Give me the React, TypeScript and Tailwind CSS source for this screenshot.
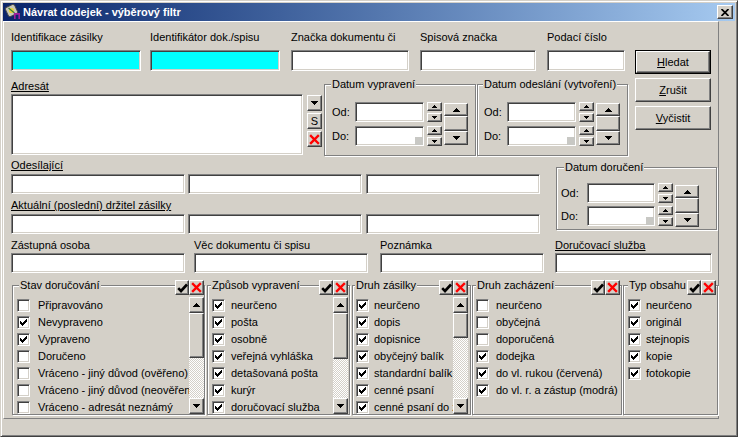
import React from "react";

const sunken =
  "border border-t-[#808080] border-l-[#808080] border-b-white border-r-white shadow-[inset_1px_1px_0_#404040,inset_-1px_-1px_0_#d4d0c8]";
const raised =
  "border border-t-white border-l-white border-b-[#404040] border-r-[#404040] shadow-[inset_-1px_-1px_0_#808080] bg-[#d4d0c8]";
const etched = "border border-[#808080] shadow-[inset_1px_1px_0_#fff,1px_1px_0_#fff]";

function TriSmall({ up }: { up?: boolean }) {
  return (
    <svg width="5" height="3" viewBox="0 0 5 3" shapeRendering="crispEdges">
      {up ? (
        <path d="M2 0h1v1h-1z M1 1h3v1h-3z M0 2h5v1h-5z" fill="#000" />
      ) : (
        <path d="M0 0h5v1h-5z M1 1h3v1h-3z M2 2h1v1h-1z" fill="#000" />
      )}
    </svg>
  );
}

function TriBig({ up }: { up?: boolean }) {
  return (
    <svg width="7" height="4" viewBox="0 0 7 4" shapeRendering="crispEdges">
      {up ? (
        <path d="M3 0h1v1h-1z M2 1h3v1h-3z M1 2h5v1h-5z M0 3h7v1h-7z" fill="#000" />
      ) : (
        <path d="M0 0h7v1h-7z M1 1h5v1h-5z M2 2h3v1h-3z M3 3h1v1h-1z" fill="#000" />
      )}
    </svg>
  );
}

function RedX({ s = 11 }: { s?: number }) {
  return (
    <svg width={s} height={s} viewBox="0 0 11 11">
      <path d="M2 2 L9 9 M9 2 L2 9" stroke="#ff0000" strokeWidth="2.4" strokeLinecap="square" />
    </svg>
  );
}

function BlackCheck() {
  return (
    <svg width="11" height="10" viewBox="0 0 11 10">
      <path d="M1.2 5.2 L4 8 L10 1.5" stroke="#000" strokeWidth="2.6" fill="none" />
    </svg>
  );
}

function Checkbox({ on }: { on: boolean }) {
  return (
    <div className={"w-[13px] h-[13px] shrink-0 bg-white flex items-center justify-center " + sunken}>
      {on && (
        <svg width="7" height="7" viewBox="0 0 7 7" shapeRendering="crispEdges">
          <path
            d="M6 0h1v1h-1z M5 1h2v1h-2z M0 2h1v1h-1z M4 2h3v1h-3z M0 3h2v1h-2z M3 3h3v1h-3z M0 4h5v1h-5z M1 5h3v1h-3z M2 6h1v1h-1z"
            fill="#000"
          />
        </svg>
      )}
    </div>
  );
}

function AppIcon() {
  return (
    <svg width="16" height="16" viewBox="0 0 16 16">
      <rect x="1.5" y="1.5" width="10" height="10" rx="2" fill="#c8c8b8" stroke="#4a4a4a" strokeWidth="0.9" transform="rotate(-25 6.5 6.5)" />
      <circle cx="6.5" cy="6.5" r="2.6" fill="#e6d23a" />
      <path d="M3.5 4 L9.5 9" stroke="#3c7a3c" strokeWidth="1.2" />
      <path d="M9 9h6v6h-1.6v-4.2h-2.8v4.2h-1.6z" fill="#a01ea0" />
    </svg>
  );
}

function SmallSpin({ className }: { className: string }) {
  return (
    <div className={"flex flex-col justify-between w-[15px] h-[20px] shrink-0 " + className}>
      <div className={"h-[9px] flex items-center justify-center " + raised}>
        <TriSmall up />
      </div>
      <div className={"h-[9px] flex items-center justify-center " + raised}>
        <TriSmall />
      </div>
    </div>
  );
}

function BigSpin({ className }: { className: string }) {
  return (
    <div className={"flex flex-col w-[24px] shrink-0 " + className}>
      <div className={"h-[13px] flex items-center justify-center " + raised}>
        <TriBig up />
      </div>
      <div className={"h-[15px] " + raised} />
      <div className={"h-[14px] flex items-center justify-center " + raised}>
        <TriBig />
      </div>
    </div>
  );
}

function DateRow({ label, labelW, inputW, grip }: { label: string; labelW: string; inputW: string; grip?: boolean }) {
  return (
    <div className="flex items-center h-[20px]">
      <span className={"shrink-0 leading-[13px] " + labelW}>{label}</span>
      <div className={"relative h-[20px] bg-white shrink-0 " + sunken + " " + inputW}>
        {grip && <div className="absolute right-0 bottom-0 w-[8px] h-[8px] bg-[#c8c8c4]" />}
      </div>
      <SmallSpin className="ml-[3px]" />
    </div>
  );
}

function DateGroup({
  className,
  label,
  labelPos,
  labelW,
  inputW,
  rowGap,
  bigCls,
}: {
  className: string;
  label: string;
  labelPos: string;
  labelW: string;
  inputW: string;
  rowGap: string;
  bigCls: string;
}) {
  return (
    <div className={"relative shrink-0 " + etched + " " + className}>
      <span className={"absolute -top-[7px] bg-[#d4d0c8] px-[1px] leading-[13px] whitespace-nowrap " + labelPos}>{label}</span>
      <div className="flex items-start">
        <div className={"flex flex-col " + rowGap}>
          <DateRow label="Od:" labelW={labelW} inputW={inputW} />
          <DateRow label="Do:" labelW={labelW} inputW={inputW} grip />
        </div>
        <BigSpin className={bigCls} />
      </div>
    </div>
  );
}

function Input({ className }: { className: string }) {
  return <div className={"bg-white shrink-0 " + sunken + " " + className} />;
}

function WinButton({ children }: { children: React.ReactNode }) {
  return <div className={"h-[24px] flex items-center justify-center " + raised}>{children}</div>;
}

type Item = [string, boolean];

function ListGroup({
  className,
  label,
  labelPos,
  btnPos,
  items,
  listCls,
  textCls,
  scroll,
  thumbH,
}: {
  className: string;
  label: string;
  labelPos: string;
  btnPos: string;
  items: Item[];
  listCls: string;
  textCls: string;
  scroll?: boolean;
  thumbH?: string;
}) {
  return (
    <div className={"relative shrink-0 h-[130px] " + etched + " " + className}>
      <span className={"absolute -top-[7px] bg-[#d4d0c8] px-[1px] leading-[13px] whitespace-nowrap " + labelPos}>{label}</span>
      <div className={"absolute -top-[6px] flex " + btnPos}>
        <div className={"w-[14px] h-[15px] flex items-center justify-center " + raised}>
          <BlackCheck />
        </div>
        <div className={"w-[15px] h-[15px] flex items-center justify-center " + raised}>
          <RedX s={11} />
        </div>
      </div>
      <div className="flex h-full pt-[11px]">
        <div className={"flex-1 overflow-hidden " + listCls}>
          {items.map(([t, on]) => (
            <div key={t} className="h-[17px] flex items-center whitespace-nowrap">
              <Checkbox on={on} />
              <span className={"leading-[13px] " + textCls}>{t}</span>
            </div>
          ))}
        </div>
        {scroll && (
          <div className="w-[15px] shrink-0 flex flex-col h-full">
            <div className={"h-[16px] flex items-center justify-center " + raised}>
              <TriBig up />
            </div>
            <div className={thumbH + " " + raised} />
            <div className="flex-1 bg-[repeating-conic-gradient(#d4d0c8_0_25%,#ffffff_0_50%)] bg-[length:2px_2px]" />
            <div className={"h-[16px] flex items-center justify-center " + raised}>
              <TriBig />
            </div>
          </div>
        )}
      </div>
    </div>
  );
}

function Label({ children, cls = "" }: { children: React.ReactNode; cls?: string }) {
  return <div className={"h-[14px] leading-[14px] whitespace-nowrap " + cls}>{children}</div>;
}

export default function App() {
  return (
    <div className="w-[738px] h-[437px] overflow-hidden bg-[#d4d0c8] font-['Liberation_Sans',Arial,sans-serif] text-[11px] leading-[13px] text-black border border-t-[#d4d0c8] border-l-[#d4d0c8] border-r-[#404040] border-b-[#404040] shadow-[inset_1px_1px_0_#fff,inset_-1px_-1px_0_#808080] p-[2px]">
      {/* title bar */}
      <div className="h-[18px] flex items-center bg-linear-to-r from-[#0a246a] to-[#a6caf0]">
        <div className="ml-[2px] w-[16px] h-[16px]">
          <AppIcon />
        </div>
        <div className="ml-[2px] text-white font-bold leading-[13px] whitespace-nowrap">Návrat dodejek - výběrový filtr</div>
        <div className={"ml-auto mr-[2px] w-[16px] h-[14px] flex items-center justify-center " + raised}>
          <svg width="8" height="7" viewBox="0 0 8 7">
            <path d="M0.5 0 L7.5 7 M7.5 0 L0.5 7" stroke="#000" strokeWidth="1.7" />
          </svg>
        </div>
      </div>

      {/* client panel */}
      <div className="w-[716px] h-[398px] border border-t-white border-l-white border-r-[#808080] border-b-[#808080] pl-[7px] pt-[8px]">
        {/* top section */}
        <div className="flex items-start">
          <div className="w-[617px] shrink-0">
            {/* row 1 */}
            <div className="flex items-start">
              <div className="w-[130px] shrink-0">
                <Label>Identifikace zásilky</Label>
                <div className={"mt-[6px] h-[21px] bg-[#00ffff] " + sunken} />
              </div>
              <div className="ml-[9px] w-[130px] shrink-0">
                <Label>Identifikátor dok./spisu</Label>
                <div className={"mt-[6px] h-[21px] bg-[#00ffff] " + sunken} />
              </div>
              <div className="ml-[11px] w-[118px] shrink-0">
                <Label>Značka dokumentu či</Label>
                <div className={"mt-[6px] h-[21px] bg-white " + sunken} />
              </div>
              <div className="ml-[11px] w-[116px] shrink-0">
                <Label>Spisová značka</Label>
                <div className={"mt-[6px] h-[21px] bg-white " + sunken} />
              </div>
              <div className="ml-[11px] w-[78px] shrink-0">
                <Label>Podací číslo</Label>
                <div className={"mt-[6px] h-[21px] bg-white " + sunken} />
              </div>
            </div>

            {/* row 2 */}
            <div className="mt-[8px] flex items-start">
              <div className="w-[292px] shrink-0">
                <div className="h-[15px] leading-[14px] underline">Adresát</div>
                <div className={"h-[61px] bg-white " + sunken} />
              </div>
              <div className="ml-[4px] mt-[16px] w-[15px] shrink-0 flex flex-col gap-[2px]">
                <div className={"h-[16px] flex items-center justify-center " + raised}>
                  <TriBig />
                </div>
                <div className={"h-[16px] flex items-center justify-center leading-[12px] " + raised}>S</div>
                <div className={"h-[16px] flex items-center justify-center " + raised}>
                  <RedX s={11} />
                </div>
              </div>
              <DateGroup
                className="ml-[2px] mt-[5px] w-[152px] h-[72px] pl-[7px] pt-[17px]"
                label="Datum vypravení"
                labelPos="left-[6px]"
                labelW="w-[23px]"
                inputW="w-[69px]"
                rowGap="gap-[4px]"
                bigCls="ml-[2px] mt-[1px]"
              />
              <DateGroup
                className="ml-[1px] mt-[5px] w-[151px] h-[72px] pl-[6px] pt-[17px]"
                label="Datum odeslání (vytvoření)"
                labelPos="left-[5px]"
                labelW="w-[23px]"
                inputW="w-[69px]"
                rowGap="gap-[4px]"
                bigCls="ml-[2px] mt-[1px]"
              />
            </div>
          </div>

          {/* buttons */}
          <div className="ml-[7px] mt-[20px] w-[76px] shrink-0 flex flex-col gap-[4px]">
            <div className="border border-black">
              <div className={"h-[22px] flex items-center justify-center " + raised}>
                <span>
                  <span className="underline">H</span>ledat
                </span>
              </div>
            </div>
            <WinButton>
              <span>
                <span className="underline">Z</span>rušit
              </span>
            </WinButton>
            <WinButton>
              <span>
                <span className="underline">V</span>yčistit
              </span>
            </WinButton>
          </div>
        </div>

        {/* row 3 */}
        <div className="mt-[2px] flex items-start">
          <div className="w-[529px] shrink-0">
            <Label cls="underline">Odesílající</Label>
            <div className="mt-[2px] flex">
              <Input className="w-[174px] h-[20px]" />
              <Input className="ml-[3px] w-[174px] h-[20px]" />
              <Input className="ml-[4px] w-[174px] h-[20px]" />
            </div>
            <Label cls="mt-[4px] underline">Aktuální (poslední) držitel zásilky</Label>
            <div className="mt-[2px] flex">
              <Input className="w-[174px] h-[20px]" />
              <Input className="ml-[3px] w-[174px] h-[20px]" />
              <Input className="ml-[4px] w-[174px] h-[20px]" />
            </div>
          </div>
          <DateGroup
            className="ml-[16px] mt-[9px] w-[161px] h-[63px] pl-[4px] pt-[15px]"
            label="Datum doručení"
            labelPos="left-[7px]"
            labelW="w-[26px]"
            inputW="w-[68px]"
            rowGap="gap-[3px]"
            bigCls="ml-[2px] mt-[2px]"
          />
        </div>

        {/* row 4 */}
        <div className="mt-[4px] flex items-start">
          <div className="w-[174px] shrink-0">
            <Label>Zástupná osoba</Label>
            <Input className="mt-[1px] h-[20px] w-full" />
          </div>
          <div className="ml-[9px] w-[174px] shrink-0">
            <Label>Věc dokumentu či spisu</Label>
            <Input className="mt-[1px] h-[20px] w-full" />
          </div>
          <div className="ml-[12px] w-[164px] shrink-0">
            <Label>Poznámka</Label>
            <Input className="mt-[1px] h-[20px] w-full" />
          </div>
          <div className="ml-[11px] w-[157px] shrink-0">
            <Label cls="underline">Doručovací služba</Label>
            <Input className="mt-[1px] h-[20px] w-full" />
          </div>
        </div>

        {/* bottom group boxes */}
        <div className="mt-[12px] flex items-start">
          <ListGroup
            className="ml-[1px] w-[193px]"
            label="Stav doručování"
            labelPos="left-[6px]"
            btnPos="right-0"
            listCls="pl-[4px]"
            textCls="ml-[8px]"
            scroll
            thumbH="h-[45px]"
            items={[
              ["Připravováno", false],
              ["Nevypraveno", true],
              ["Vypraveno", true],
              ["Doručeno", false],
              ["Vráceno - jiný důvod (ověřeno)", false],
              ["Vráceno - jiný důvod (neověřeno)", false],
              ["Vráceno - adresát neznámý", false],
            ]}
          />
          <ListGroup
            className="ml-[2px] w-[143px] pr-[1px]"
            label="Způsob vypravení"
            labelPos="left-[3px]"
            btnPos="right-[1px]"
            listCls="pl-[4px]"
            textCls="ml-[6px]"
            scroll
            thumbH="h-[46px]"
            items={[
              ["neurčeno", true],
              ["pošta", true],
              ["osobně", true],
              ["veřejná vyhláška", true],
              ["detašovaná pošta", true],
              ["kurýr", true],
              ["doručovací služba", true],
            ]}
          />
          <ListGroup
            className="ml-[2px] w-[119px] pr-[2px]"
            label="Druh zásilky"
            labelPos="left-[2px]"
            btnPos="right-[2px]"
            listCls="pl-[3px]"
            textCls="ml-[5px]"
            scroll
            thumbH="h-[25px]"
            items={[
              ["neurčeno", true],
              ["dopis", true],
              ["dopisnice", true],
              ["obyčejný balík", true],
              ["standardní balík", true],
              ["cenné psaní", true],
              ["cenné psaní do zahraničí", true],
            ]}
          />
          <ListGroup
            className="ml-[1px] w-[150px]"
            label="Druh zacházení"
            labelPos="left-[3px]"
            btnPos="right-[1px]"
            listCls="pl-[3px]"
            textCls="ml-[7px]"
            items={[
              ["neurčeno", false],
              ["obyčejná", false],
              ["doporučená", false],
              ["dodejka", true],
              ["do vl. rukou (červená)", true],
              ["do vl. r. a zástup (modrá)", true],
            ]}
          />
          <ListGroup
            className="ml-[1px] w-[95px]"
            label="Typ obsahu"
            labelPos="left-[4px]"
            btnPos="right-[1px]"
            listCls="pl-[4px]"
            textCls="ml-[5px]"
            items={[
              ["neurčeno", true],
              ["originál", true],
              ["stejnopis", true],
              ["kopie", true],
              ["fotokopie", true],
            ]}
          />
        </div>
      </div>
    </div>
  );
}
